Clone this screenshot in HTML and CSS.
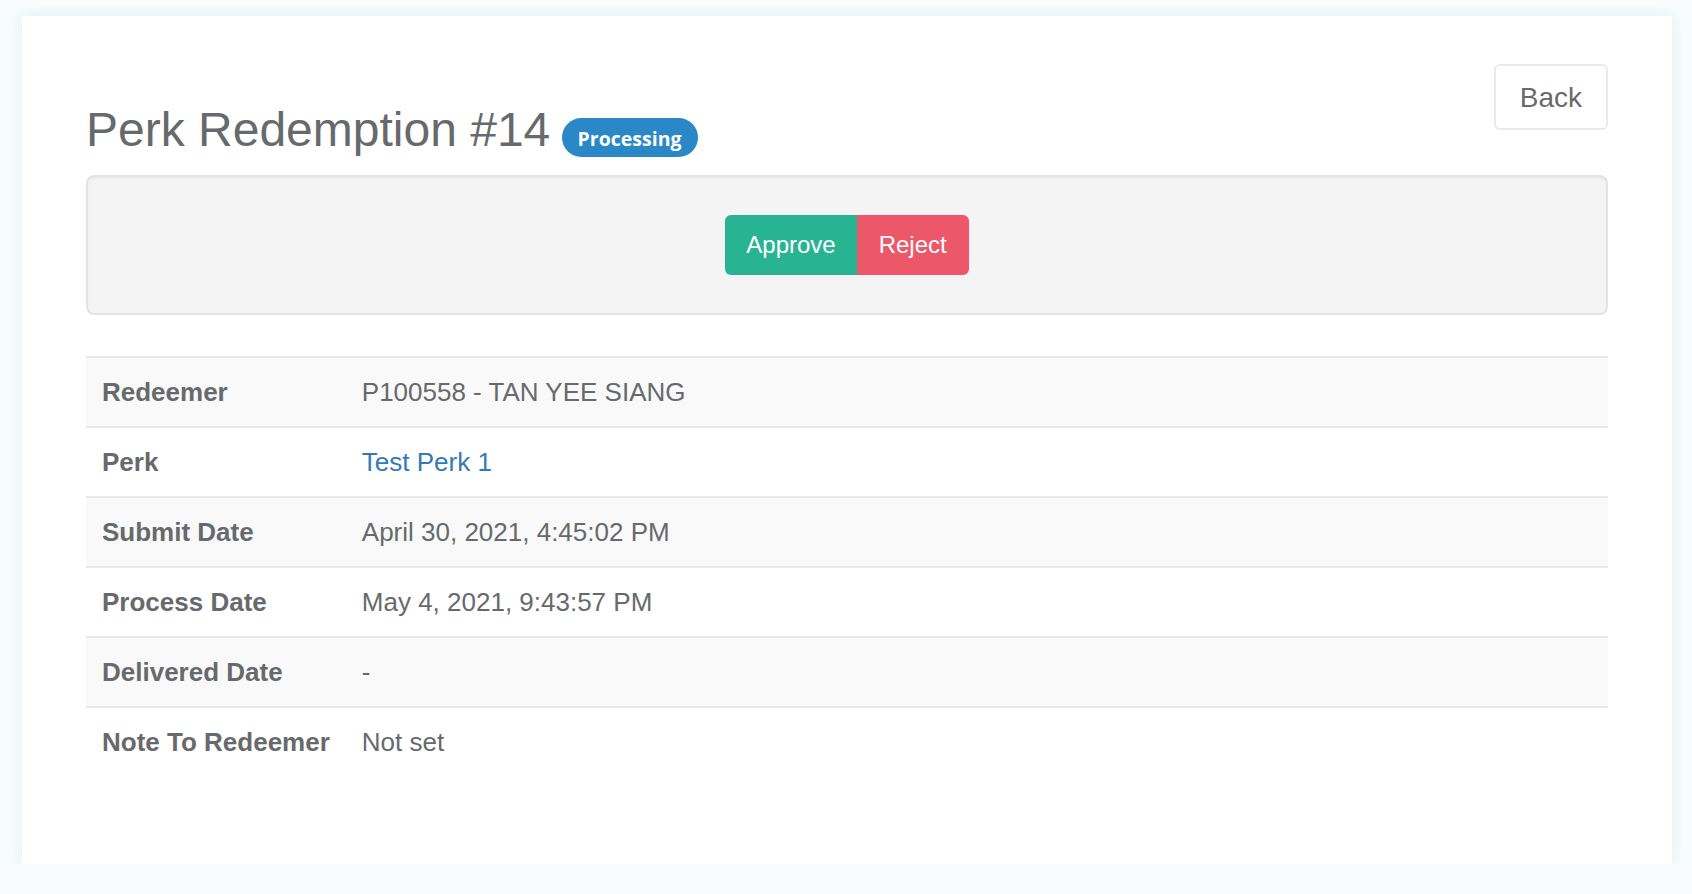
FILE: index.html
```html
<!DOCTYPE html>
<html lang="en">
<head>
<meta charset="utf-8">
<title>Perk Redemption #14</title>
<link rel="stylesheet" href="styles.css">
</head>
<body>
<div class="card">
  <div class="header">
    <h2 class="title">Perk Redemption #14 <span class="badge">Processing</span></h2>
    <a class="btn-back" href="#">Back</a>
  </div>
  <div class="well">
    <div class="btn-group">
      <button class="btn btn-approve">Approve</button><button class="btn btn-reject">Reject</button>
    </div>
  </div>
  <table class="details">
    <tbody>
      <tr class="odd"><th>Redeemer</th><td>P100558 - TAN YEE SIANG</td></tr>
      <tr><th>Perk</th><td><a class="link" href="#">Test Perk 1</a></td></tr>
      <tr class="odd"><th>Submit Date</th><td>April 30, 2021, 4:45:02 PM</td></tr>
      <tr><th>Process Date</th><td>May 4, 2021, 9:43:57 PM</td></tr>
      <tr class="odd"><th>Delivered Date</th><td>-</td></tr>
      <tr><th>Note To Redeemer</th><td>Not set</td></tr>
    </tbody>
  </table>
</div>
</body>
</html>
```

FILE: styles.css
```css
html, body {
  margin: 0;
  padding: 0;
}
body {
  background: #f8fcfd;
  font-family: "Liberation Sans", Arial, sans-serif;
  color: #676a6c;
}
.card {
  margin: 16px 20px 0 22px;
  padding: 48px 64px 88px 64px;
  background: #ffffff;
  box-shadow: 0 0 14px rgba(190, 225, 232, 0.45);
}
.header {
  display: flex;
  justify-content: space-between;
  align-items: flex-start;
}
.title {
  margin: 39px 0 0 0;
  font-size: 48px;
  font-weight: normal;
  line-height: 53px;
  color: #676a6c;
}
.badge {
  display: inline-block;
  vertical-align: baseline;
  margin-left: -2px;
  font-family: "Open Sans", sans-serif;
  font-weight: 700;
  font-size: 19.5px;
  line-height: 24px;
  padding: 9px 16px 6px 16px;
  border-radius: 20px;
  background: #2a88c7;
  color: #ffffff;
}
.btn-back {
  display: block;
  box-sizing: border-box;
  height: 66px;
  padding: 12px 24px;
  font-size: 28px;
  line-height: 40px;
  color: #676a6c;
  text-decoration: none;
  background: #ffffff;
  border: 2px solid #e7eaec;
  border-radius: 6px;
}
.well {
  margin-top: 18px;
  padding: 38px;
  background: #f4f4f4;
  border: 2px solid #e3e3e3;
  border-radius: 8px;
  box-shadow: inset 0 2px 2px rgba(0, 0, 0, 0.04);
  display: flex;
  justify-content: center;
}
.btn-group {
  display: flex;
}
.btn {
  font-family: "Liberation Sans", Arial, sans-serif;
  font-size: 24px;
  line-height: 36px;
  padding: 12px 21px;
  border: 0;
  color: #ffffff;
  margin: 0;
}
.btn-approve {
  background: #28b493;
  border-radius: 6px 0 0 6px;
}
.btn-reject {
  background: #ec576a;
  border-radius: 0 6px 6px 0;
  padding: 12px 22px;
}
.details {
  margin-top: 41px;
  width: 100%;
  border-collapse: collapse;
  font-size: 26px;
}
.details th, .details td {
  padding: 16px;
  line-height: 36px;
  text-align: left;
  vertical-align: middle;
  border-top: 2px solid #e7eaec;
}
.details th {
  font-weight: bold;
  width: 1%;
  white-space: nowrap;
}
.details tr.odd {
  background: #f9f9f9;
}
.link {
  color: #337ab7;
  text-decoration: none;
}
```
